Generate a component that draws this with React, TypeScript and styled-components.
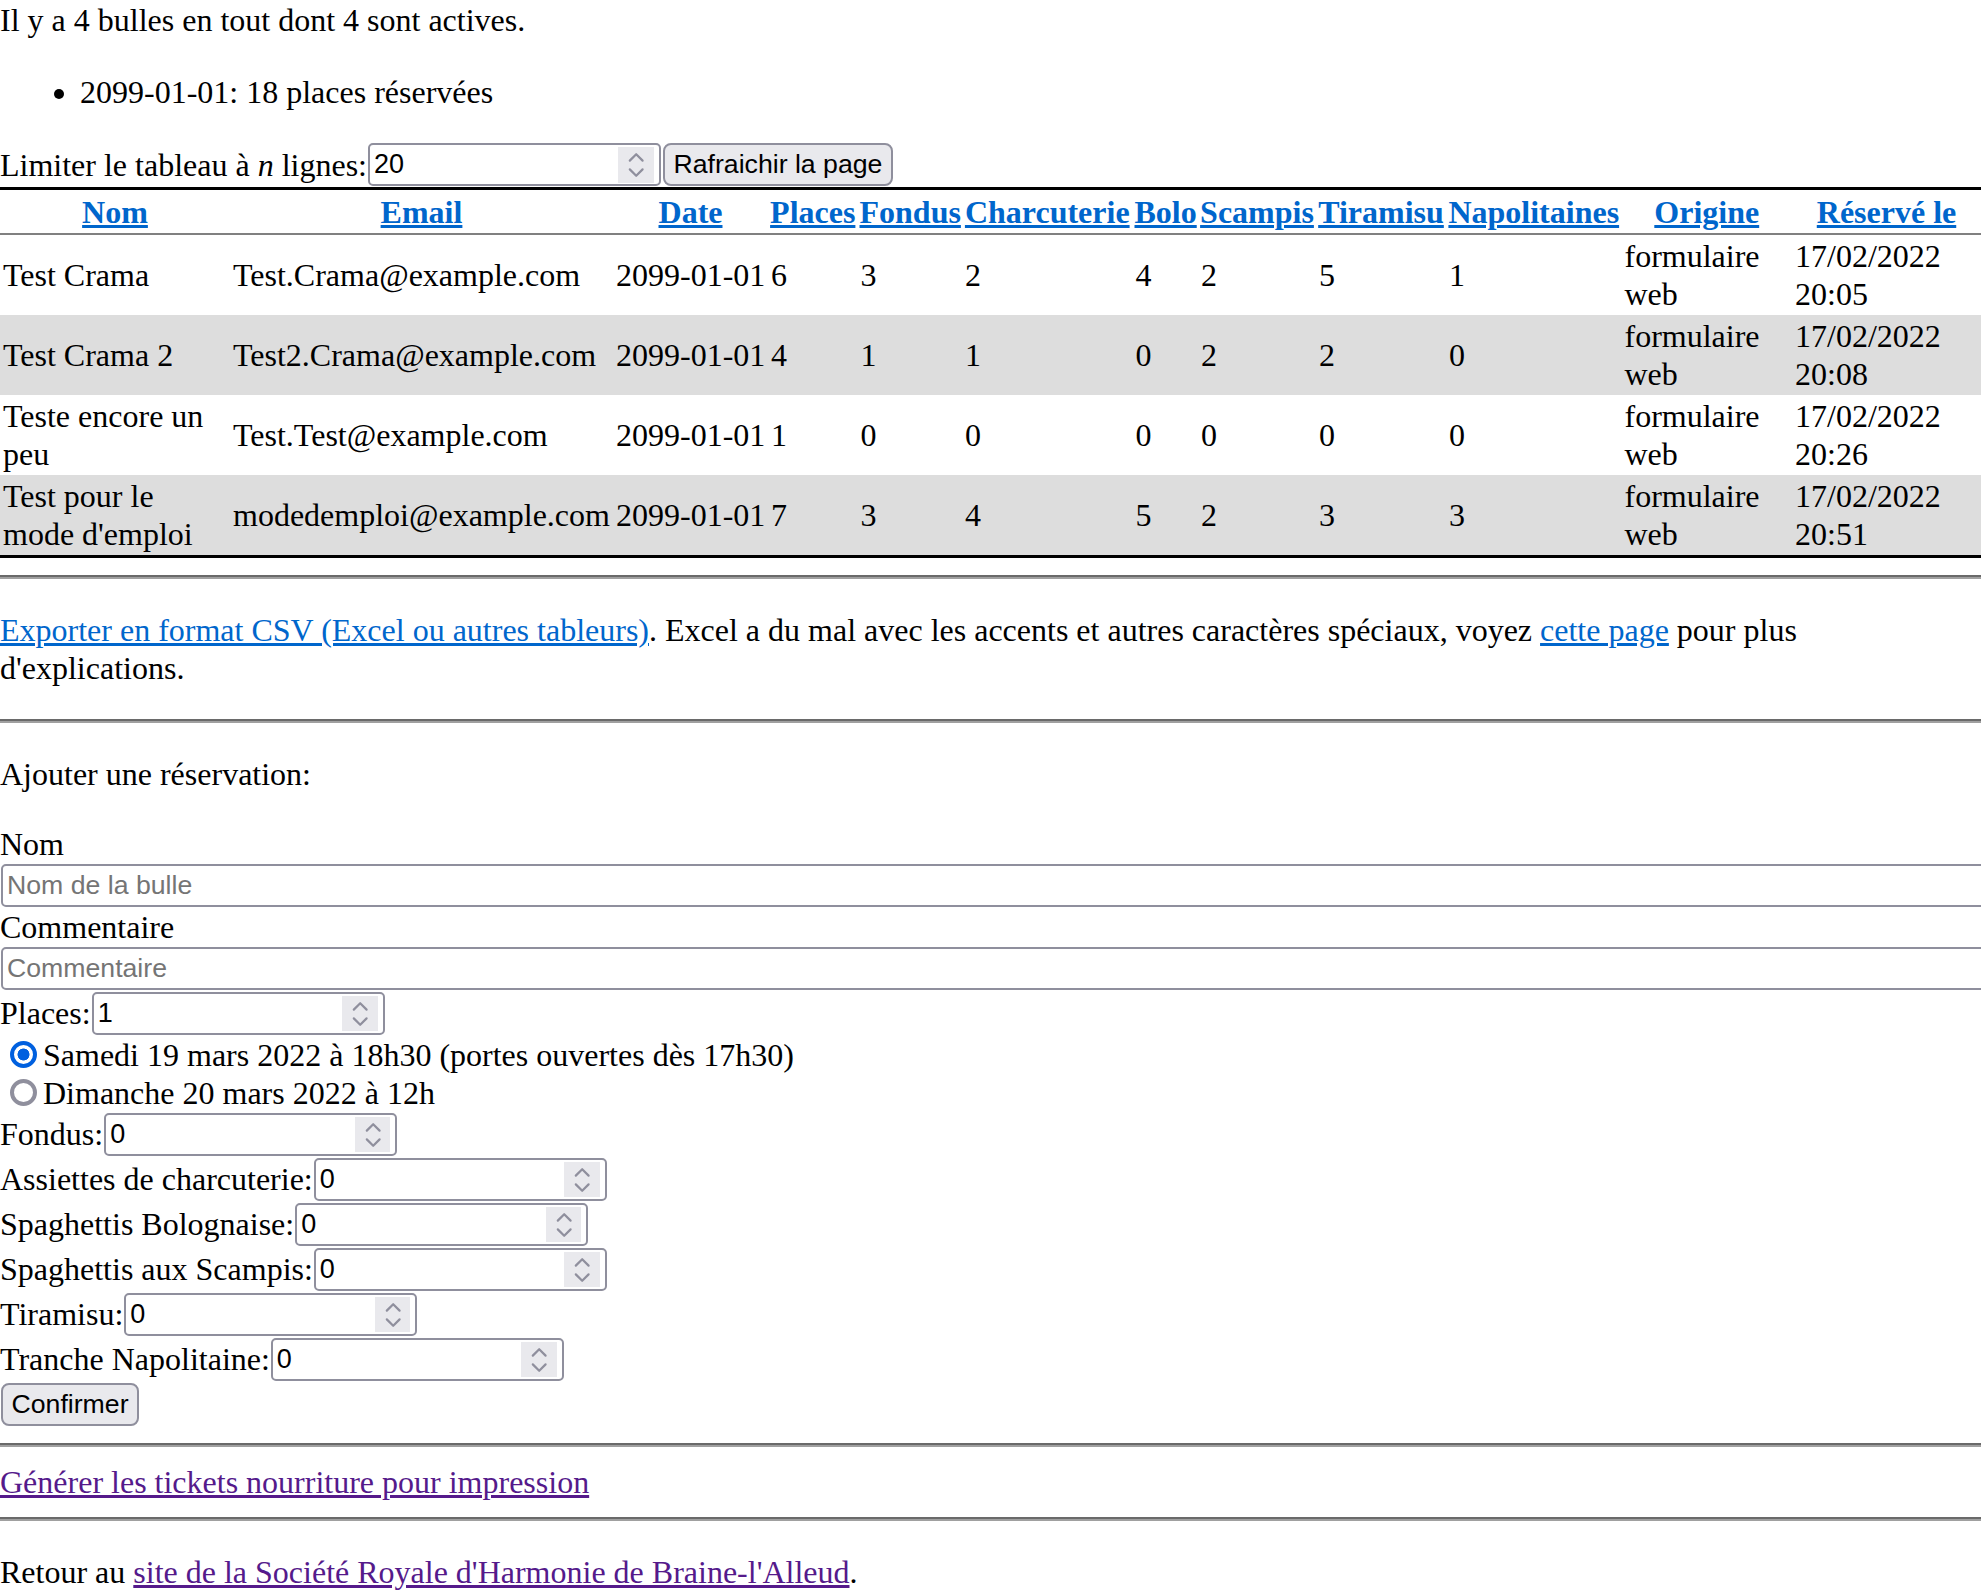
import React from "react";
import styled, { createGlobalStyle } from "styled-components";

const GlobalStyle = createGlobalStyle`
  html, body {
    margin: 0;
    padding: 0;
    overflow: hidden;
    background: #ffffff;
  }
  body {
    font-family: "Liberation Serif", "Times New Roman", serif;
    font-size: 32px;
    line-height: 38px;
    color: #000000;
  }
`;

const Page = styled.div`
  overflow: hidden;
`;

const Intro = styled.p`
  margin: 0.5px 0 0;
`;

const Summary = styled.ul`
  margin: 34.5px 0 0;
  padding-left: 80px;
`;

const Para = styled.p<{ $last?: boolean }>`
  margin: 32px 0 ${(p) => (p.$last ? "0" : "32px")};
`;

const Em = styled.i`
  font-style: italic;
`;

const LimitRow = styled.div`
  margin-top: 31.3px;
  display: flex;
  align-items: center;
  height: 45px;
`;

const Table = styled.table`
  width: 100%;
  table-layout: fixed;
  border-collapse: separate;
  border-spacing: 0;
  border-top: 3px solid #000;
  border-bottom: 3px solid #000;
`;

const Th = styled.th`
  padding: 3.2px 2px 2px;
  font-weight: bold;
  text-align: center;
  vertical-align: middle;
  border-bottom: 2px solid #808080;
  white-space: nowrap;
`;

const Row = styled.tr<{ $alt?: boolean }>`
  background: ${(p) => (p.$alt ? "#dddddd" : "#ffffff")};
`;

const Td = styled.td`
  padding: 2px 2px 2px 3px;
  text-align: left;
  vertical-align: middle;
`;

const HeadLink = styled.a`
  color: #0066cc;
  text-decoration: underline;
`;

const TextLink = styled.a<{ $visited?: boolean }>`
  color: ${(p) => (p.$visited ? "#551a8b" : "#0066cc")};
  text-decoration: underline;
`;

const Rule = styled.hr<{ $afterTable?: boolean }>`
  margin: ${(p) => (p.$afterTable ? "16.5px" : "16px")} 0 16px;
  height: 0;
  border: 0;
  border-top: 2px solid #6a6a6a;
  border-bottom: 2px solid #a0a0a0;
`;

const Form = styled.form`
  margin: 0;
`;

const FieldLabel = styled.label`
  display: block;
  height: 38px;
`;

const WideInput = styled.input`
  display: block;
  box-sizing: border-box;
  width: calc(100% + 40px);
  height: 43px;
  margin: 1px 0 1px 1px;
  padding: 0 4px;
  border: 2px solid #8f8f9d;
  border-radius: 5px;
  background: #fff;
  font-family: "Liberation Sans", Arial, sans-serif;
  font-size: 26.67px;
  line-height: normal;
  color: #000;
  outline: none;
  &::placeholder {
    color: #757575;
    opacity: 1;
  }
`;

const FieldRow = styled.div`
  display: flex;
  align-items: center;
  height: 45px;
  white-space: nowrap;
`;

const RadioRow = styled.label`
  display: flex;
  align-items: center;
  height: 38px;
  white-space: nowrap;
`;

const Radio = styled.input`
  appearance: none;
  -webkit-appearance: none;
  box-sizing: border-box;
  flex: none;
  width: 27px;
  height: 27px;
  margin: 0 6px 0 10px;
  border-radius: 50%;
  border: 4px solid #8f8f9d;
  background: #fff;
  &:checked {
    border-color: #0060df;
    background: radial-gradient(circle, #0060df 0 5.7px, #ffffff 6.3px);
  }
`;

const NumberBox = styled.span`
  box-sizing: border-box;
  display: inline-flex;
  align-items: center;
  flex: none;
  width: 293px;
  height: 43px;
  margin: 1px;
  padding: 0 5px 0 4px;
  border: 2px solid #8f8f9d;
  border-radius: 5px;
  background: #fff;
`;

const NumberInput = styled.input`
  flex: 1;
  min-width: 0;
  border: none;
  outline: none;
  padding: 0;
  margin: 0;
  background: transparent;
  font-family: "Liberation Sans", Arial, sans-serif;
  font-size: 27px;
  line-height: normal;
  color: #000;
  -moz-appearance: textfield;
  &::-webkit-inner-spin-button,
  &::-webkit-outer-spin-button {
    -webkit-appearance: none;
    margin: 0;
  }
`;

const Spinner = styled.span`
  flex: none;
  display: block;
  width: 35.5px;
  height: 35.5px;
  background: #e9e9ed;
`;

const Button = styled.button`
  box-sizing: border-box;
  flex: none;
  height: 43px;
  margin: 1px;
  padding: 0 8.5px;
  border: 2px solid #8f8f9d;
  border-radius: 8px;
  background: #e9e9ed;
  color: #000;
  font-family: "Liberation Sans", Arial, sans-serif;
  font-size: 26.67px;
  line-height: normal;
  white-space: nowrap;
`;

const LinkLine = styled.div`
  height: 38px;
`;

function SpinIcon() {
  return (
    <svg width="35.5" height="35.5" viewBox="0 0 35.5 35.5" aria-hidden="true">
      <path
        d="M11.8 13.6 L18.2 7.2 L24.6 13.6"
        fill="none"
        stroke="#8f8f9d"
        strokeWidth="2.2"
        strokeLinecap="round"
        strokeLinejoin="round"
      />
      <path
        d="M11.8 22.4 L18.2 28.8 L24.6 22.4"
        fill="none"
        stroke="#8f8f9d"
        strokeWidth="2.2"
        strokeLinecap="round"
        strokeLinejoin="round"
      />
    </svg>
  );
}

function NumberField({ value }: { value: string }) {
  return (
    <NumberBox>
      <NumberInput type="number" defaultValue={value} />
      <Spinner>
        <SpinIcon />
      </Spinner>
    </NumberBox>
  );
}

const columns: { label: string; width: number }[] = [
  { label: "Nom", width: 230 },
  { label: "Email", width: 383 },
  { label: "Date", width: 155 },
  { label: "Places", width: 89.5 },
  { label: "Fondus", width: 104.5 },
  { label: "Charcuterie", width: 170.5 },
  { label: "Bolo", width: 65.5 },
  { label: "Scampis", width: 118 },
  { label: "Tiramisu", width: 130 },
  { label: "Napolitaines", width: 175.5 },
  { label: "Origine", width: 170.5 },
  { label: "Réservé le", width: 189 },
];

const rows: string[][] = [
  ["Test Crama", "Test.Crama@example.com", "2099-01-01", "6", "3", "2", "4", "2", "5", "1", "formulaire web", "17/02/2022 20:05"],
  ["Test Crama 2", "Test2.Crama@example.com", "2099-01-01", "4", "1", "1", "0", "2", "2", "0", "formulaire web", "17/02/2022 20:08"],
  ["Teste encore un peu", "Test.Test@example.com", "2099-01-01", "1", "0", "0", "0", "0", "0", "0", "formulaire web", "17/02/2022 20:26"],
  ["Test pour le mode d'emploi", "modedemploi@example.com", "2099-01-01", "7", "3", "4", "5", "2", "3", "3", "formulaire web", "17/02/2022 20:51"],
];

const dishes: { label: string }[] = [
  { label: "Fondus:" },
  { label: "Assiettes de charcuterie:" },
  { label: "Spaghettis Bolognaise:" },
  { label: "Spaghettis aux Scampis:" },
  { label: "Tiramisu:" },
  { label: "Tranche Napolitaine:" },
];

export default function App() {
  return (
    <>
      <GlobalStyle />
      <Page>
        <Intro>Il y a 4 bulles en tout dont 4 sont actives.</Intro>
        <Summary>
          <li>2099-01-01: 18 places réservées</li>
        </Summary>
        <LimitRow>
          <span>
            Limiter le tableau à <Em>n</Em> lignes:
          </span>
          <NumberField value="20" />
          <Button type="button">Rafraichir la page</Button>
        </LimitRow>
        <Table>
          <colgroup>
            {columns.map((c) => (
              <col key={c.label} style={{ width: `${c.width}px` }} />
            ))}
          </colgroup>
          <thead>
            <tr>
              {columns.map((c) => (
                <Th key={c.label}>
                  <HeadLink href="#">{c.label}</HeadLink>
                </Th>
              ))}
            </tr>
          </thead>
          <tbody>
            {rows.map((r, i) => (
              <Row key={i} $alt={i % 2 === 1}>
                {r.map((cell, j) => (
                  <Td key={j}>{cell}</Td>
                ))}
              </Row>
            ))}
          </tbody>
        </Table>
        <Rule $afterTable />
        <Para>
          <TextLink href="#">Exporter en format CSV (Excel ou autres tableurs)</TextLink>. Excel a du mal
          avec les accents et autres caractères spéciaux, voyez <TextLink href="#">cette page</TextLink> pour
          plus d'explications.
        </Para>
        <Rule />
        <Para>Ajouter une réservation:</Para>
        <Form onSubmit={(e) => e.preventDefault()}>
          <FieldLabel>Nom</FieldLabel>
          <WideInput type="text" placeholder="Nom de la bulle" />
          <FieldLabel>Commentaire</FieldLabel>
          <WideInput type="text" placeholder="Commentaire" />
          <FieldRow>
            Places:
            <NumberField value="1" />
          </FieldRow>
          <RadioRow>
            <Radio type="radio" name="date" defaultChecked />
            Samedi 19 mars 2022 à 18h30 (portes ouvertes dès 17h30)
          </RadioRow>
          <RadioRow>
            <Radio type="radio" name="date" />
            Dimanche 20 mars 2022 à 12h
          </RadioRow>
          {dishes.map((d) => (
            <FieldRow key={d.label}>
              {d.label}
              <NumberField value="0" />
            </FieldRow>
          ))}
          <FieldRow>
            <Button type="submit">Confirmer</Button>
          </FieldRow>
        </Form>
        <Rule />
        <LinkLine>
          <TextLink href="#" $visited>
            Générer les tickets nourriture pour impression
          </TextLink>
        </LinkLine>
        <Rule />
        <Para $last>
          Retour au{" "}
          <TextLink href="#" $visited>
            site de la Société Royale d'Harmonie de Braine-l'Alleud
          </TextLink>
          .
        </Para>
      </Page>
    </>
  );
}
